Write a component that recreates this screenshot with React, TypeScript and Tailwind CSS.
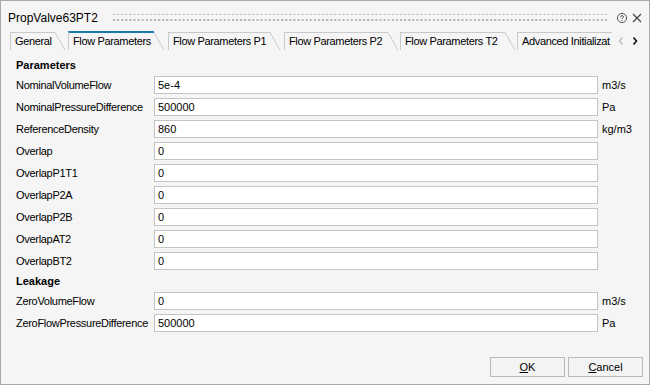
import React from "react";

type TabProps = { label: string; body: string; active?: boolean; gap: string; slant?: boolean };

function Tab({ label, body, active, gap, slant = true }: TabProps) {
  return (
    <div className={`flex shrink-0 ${gap} ${active ? "h-[19px]" : "h-[18px]"}`}>
      <div
        className={`${body} flex items-center overflow-hidden whitespace-nowrap border-l border-[#c9c9c9] pl-[4px] tracking-[-0.35px] ${
          active ? "border-t-2 border-t-[#1b7bb0]" : "border-t"
        }`}
      >
        {label}
      </div>
      {slant && (
        <svg width="10" className="h-full" viewBox="0 0 10 18" preserveAspectRatio="none">
          <line x1="0" y1={active ? 1.5 : 0.5} x2="10" y2="18" stroke="#c9c9c9" strokeWidth="1" vectorEffect="non-scaling-stroke" />
        </svg>
      )}
    </div>
  );
}

function Row({ label, value, unit }: { label: string; value: string; unit?: string }) {
  return (
    <div className="flex h-[22px] items-center">
      <div className="w-[138px] whitespace-nowrap tracking-[-0.3px]">{label}</div>
      <div className="flex h-[18px] w-[444px] items-center border border-[#c4c4c4] bg-white px-[3px]">{value}</div>
      {unit && <div className="ml-[4px]">{unit}</div>}
    </div>
  );
}

export default function App() {
  return (
    <div className="flex h-[385px] w-[650px] flex-col overflow-hidden border border-[#a9a9a9] bg-[#f5f5f5] font-['Liberation_Sans',Arial,sans-serif] text-[11px] text-black">
      {/* title bar */}
      <div className="flex h-[30px] items-center pl-[7px] pt-[4px]">
        <div className="w-[98px] text-[12px]">PropValve63PT2</div>
        <svg width="494" height="10" className="ml-[7px]">
          <defs>
            <pattern id="grip" width="4.1" height="6" patternUnits="userSpaceOnUse">
              <rect x="0" y="0" width="2" height="2" fill="#b3b3b3" />
            </pattern>
          </defs>
          <rect x="0" y="1" width="494" height="8" fill="url(#grip)" />
        </svg>
        <svg width="12" height="12" viewBox="0 0 12 12" className="ml-[9px]">
          <circle cx="6" cy="6" r="4.6" fill="none" stroke="#555" strokeWidth="1" />
          <path d="M4.5 4.9 C4.5 3.2 7.5 3.2 7.5 4.9 C7.5 6 6 6 6 7.2" fill="none" stroke="#555" strokeWidth="1" />
          <circle cx="6" cy="8.6" r="0.6" fill="#555" />
        </svg>
        <svg width="10" height="10" viewBox="0 0 10 10" className="ml-[4px]">
          <path d="M1 1 L9 9 M9 1 L1 9" stroke="#444" strokeWidth="1.2" />
        </svg>
      </div>

      {/* tabs */}
      <div className="flex h-[19px] items-end pl-[9px]">
        <Tab label="General" body="w-[45px] pl-[3px]" gap="" />
        <Tab label="Flow Parameters" body="w-[86px]" gap="ml-[3px]" active />
        <Tab label="Flow Parameters P1" body="w-[102px]" gap="ml-[4px]" />
        <Tab label="Flow Parameters P2" body="w-[104px]" gap="ml-[4px]" />
        <Tab label="Flow Parameters T2" body="w-[105px]" gap="ml-[2px]" />
        <Tab label="Advanced Initializat" body="w-[95px]" gap="ml-[2px]" slant={false} />
        <div className="flex h-[18px] items-center">
          <svg width="8" height="10" viewBox="0 0 8 10" className="ml-[5px]">
            <path d="M5.5 1.5 L2.5 5 L5.5 8.5" fill="none" stroke="#c3c3c3" strokeWidth="1.6" />
          </svg>
          <svg width="8" height="10" viewBox="0 0 8 10" className="ml-[6px]">
            <path d="M2.5 1.5 L5.5 5 L2.5 8.5" fill="none" stroke="#111" strokeWidth="1.6" />
          </svg>
        </div>
      </div>

      {/* content */}
      <div className="flex flex-col pl-[15px] pt-[6px]">
        <div className="flex h-[18px] items-center font-bold">Parameters</div>
        <Row label="NominalVolumeFlow" value="5e-4" unit="m3/s" />
        <Row label="NominalPressureDifference" value="500000" unit="Pa" />
        <Row label="ReferenceDensity" value="860" unit="kg/m3" />
        <Row label="Overlap" value="0" />
        <Row label="OverlapP1T1" value="0" />
        <Row label="OverlapP2A" value="0" />
        <Row label="OverlapP2B" value="0" />
        <Row label="OverlapAT2" value="0" />
        <Row label="OverlapBT2" value="0" />
        <div className="flex h-[18px] items-center font-bold">Leakage</div>
        <Row label="ZeroVolumeFlow" value="0" unit="m3/s" />
        <Row label="ZeroFlowPressureDifference" value="500000" unit="Pa" />
      </div>

      <div className="flex-1" />

      {/* footer */}
      <div className="flex justify-end gap-[3px] pb-[7px] pr-[6px]">
        <button className="flex h-[20px] w-[75px] items-center justify-center border border-[#b9b9b9] bg-[#f3f3f3]">
          <span>
            <span className="underline">O</span>K
          </span>
        </button>
        <button className="flex h-[20px] w-[75px] items-center justify-center border border-[#b9b9b9] bg-[#f3f3f3]">
          <span>
            <span className="underline">C</span>ancel
          </span>
        </button>
      </div>
    </div>
  );
}
